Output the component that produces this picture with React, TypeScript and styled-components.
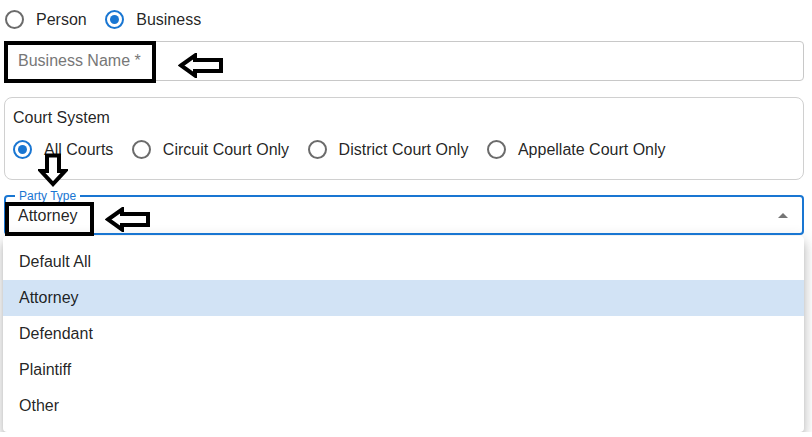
import styled, { createGlobalStyle } from "styled-components";

const GlobalStyle = createGlobalStyle`
  body {
    margin: 0;
    background: #ffffff;
    font-family: "Liberation Sans", Arial, sans-serif;
    color: rgba(0, 0, 0, 0.87);
  }
`;

const courts = ["All Courts", "Circuit Court Only", "District Court Only", "Appellate Court Only"];
const partyTypes = ["Default All", "Attorney", "Defendant", "Plaintiff", "Other"];

function Arrow({ direction }: { direction: "left" | "down" }) {
  if (direction === "down") {
    return (
      <svg width="30" height="34" viewBox="0 0 30 34">
        <polygon
          points="9,2.5 21,2.5 21,18 27,18 15,31 3,18 9,18"
          fill="#fff"
          stroke="#000"
          strokeWidth="4"
          strokeLinejoin="miter"
        />
      </svg>
    );
  }
  return (
    <svg width="46" height="25" viewBox="0 0 46 25">
      <polygon
        points="3,12.5 17,2.5 17,7 43,7 43,18 17,18 17,22.5"
        fill="#fff"
        stroke="#000"
        strokeWidth="4"
        strokeLinejoin="miter"
      />
    </svg>
  );
}

function Radio({ label, checked }: { label: string; checked?: boolean }) {
  return (
    <Option>
      <Circle $checked={checked} />
      <span>{label}</span>
    </Option>
  );
}

export default function App() {
  return (
    <>
      <GlobalStyle />
      <Page>
        <RadioRow $indent={1}>
          <Radio label="Person" />
          <Radio label="Business" checked />
        </RadioRow>

        <Field>
          <Placeholder>Business Name *</Placeholder>
          <Highlight $left={-1} $top={-1} $width={152} $height={42} />
          <Pointer $left={173} $top={11}>
            <Arrow direction="left" />
          </Pointer>
        </Field>

        <Card>
          <CardTitle>Court System</CardTitle>
          <RadioRow $indent={0}>
            {courts.map((c, i) => (
              <Radio key={c} label={c} checked={i === 0} />
            ))}
          </RadioRow>
          <Pointer $left={33} $top={55}>
            <Arrow direction="down" />
          </Pointer>
        </Card>

        <SelectField>
          <Legend>Party Type</Legend>
          <Value>Attorney</Value>
          <Caret />
          <Highlight $left={-1} $top={5} $width={89} $height={34} />
          <Pointer $left={99} $top={10}>
            <Arrow direction="left" />
          </Pointer>
        </SelectField>

        <Menu>
          {partyTypes.map((p) => (
            <MenuItem key={p} $selected={p === "Attorney"}>
              {p}
            </MenuItem>
          ))}
        </Menu>
      </Page>
    </>
  );
}

const Page = styled.div`
  display: flex;
  flex-direction: column;
  padding: 0 8px 0 4px;
  font-size: 16px;
`;

const RadioRow = styled.div<{ $indent: number }>`
  display: flex;
  align-items: center;
  height: 39px;
  padding-left: ${(p) => p.$indent}px;
`;

const Option = styled.label`
  display: inline-flex;
  align-items: center;
  gap: 12px;
  margin-right: 18.5px;
  line-height: 20px;
  color: rgba(0, 0, 0, 0.87);
`;

const Circle = styled.span<{ $checked?: boolean }>`
  box-sizing: border-box;
  width: 19px;
  height: 19px;
  border-radius: 50%;
  border: 2px solid ${(p) => (p.$checked ? "#1976d2" : "#6b6b6b")};
  display: flex;
  align-items: center;
  justify-content: center;
  &::after {
    content: "";
    width: 9px;
    height: 9px;
    border-radius: 50%;
    background: ${(p) => (p.$checked ? "#1976d2" : "transparent")};
  }
`;

const Field = styled.div`
  position: relative;
  box-sizing: border-box;
  margin-top: 2px;
  height: 40px;
  border: 1px solid #c8c8c8;
  border-radius: 4px;
  display: flex;
  align-items: center;
  padding-left: 13px;
`;

const Placeholder = styled.span`
  color: #777777;
`;

const Highlight = styled.div<{ $left: number; $top: number; $width: number; $height: number }>`
  position: absolute;
  left: ${(p) => p.$left}px;
  top: ${(p) => p.$top}px;
  width: ${(p) => p.$width}px;
  height: ${(p) => p.$height}px;
  box-sizing: border-box;
  border: 4px solid #000;
`;

const Pointer = styled.div<{ $left: number; $top: number }>`
  position: absolute;
  left: ${(p) => p.$left}px;
  top: ${(p) => p.$top}px;
  line-height: 0;
  z-index: 2;
`;

const Card = styled.div`
  position: relative;
  margin-top: 16px;
  border: 1px solid #d0d0d0;
  border-radius: 8px;
  padding: 8px 8px 10px;
`;

const CardTitle = styled.div`
  line-height: 24px;
`;

const SelectField = styled.div`
  position: relative;
  box-sizing: border-box;
  margin-top: 15px;
  height: 40px;
  border: 2px solid #1976d2;
  border-radius: 4px;
  display: flex;
  align-items: center;
  padding: 2px 12px 0;
`;

const Legend = styled.span`
  position: absolute;
  left: 9px;
  top: -8px;
  padding: 0 4px;
  background: #fff;
  font-size: 12px;
  line-height: 14px;
  color: #1976d2;
`;

const Value = styled.span`
  flex: 1;
  color: rgba(0, 0, 0, 0.87);
`;

const Caret = styled.span`
  width: 0;
  height: 0;
  margin-right: 2px;
  margin-bottom: 2px;
  border-left: 5px solid transparent;
  border-right: 5px solid transparent;
  border-bottom: 5px solid #757575;
`;

const Menu = styled.ul`
  list-style: none;
  margin: 1px 0 0 -1px;
  padding: 8px 0;
  background: #fff;
  border-radius: 4px;
  box-shadow: 0 5px 5px -3px rgba(0, 0, 0, 0.2), 0 8px 10px 1px rgba(0, 0, 0, 0.14),
    0 3px 14px 2px rgba(0, 0, 0, 0.12);
`;

const MenuItem = styled.li<{ $selected?: boolean }>`
  height: 36px;
  display: flex;
  align-items: center;
  padding: 0 16px;
  background: ${(p) => (p.$selected ? "#d2e3f5" : "transparent")};
  color: rgba(0, 0, 0, 0.87);
`;
